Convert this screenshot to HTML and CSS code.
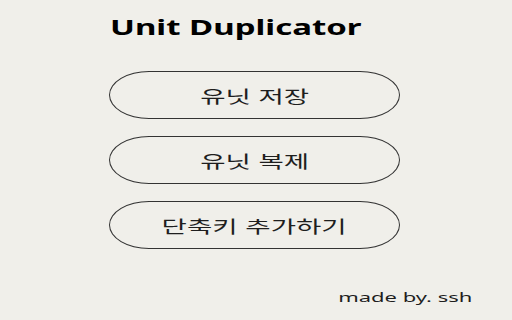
FILE: index.html
```html
<!DOCTYPE html>
<html lang="ko">
<head>
<meta charset="utf-8">
<link rel="stylesheet" href="styles.css">
</head>
<body>
<div class="app">
  <h1 class="title"><span class="stretch">Unit Duplicator</span></h1>
  <div class="buttons">
    <button class="pill"><span class="stretch">유닛 저장</span></button>
    <button class="pill"><span class="stretch">유닛 복제</span></button>
    <button class="pill"><span class="stretch">단축키 추가하기</span></button>
  </div>
  <div class="footer"><span class="stretch right">made by. ssh</span></div>
</div>
</body>
</html>
```

FILE: styles.css
```css
html, body {
  margin: 0;
  padding: 0;
  background: #f0efea;
}
body {
  width: 512px;
  height: 320px;
  overflow: hidden;
  font-family: "Noto Sans", "Noto Sans CJK KR", sans-serif;
  color: #1e1e1e;
}
.app {
  display: flex;
  flex-direction: column;
  padding: 15px 0 0 109px;
}
.stretch {
  display: inline-block;
  transform-origin: center;
  white-space: nowrap;
}
.title {
  margin: 0;
  font-size: 21px;
  line-height: 24px;
  font-weight: 700;
  color: #000;
  padding-left: 1px;
}
.title .stretch {
  transform: scaleX(1.57);
  transform-origin: left;
}
.buttons {
  display: flex;
  flex-direction: column;
  gap: 17px;
  margin-top: 32px;
}
.pill {
  width: 291px;
  height: 48px;
  box-sizing: border-box;
  border: 1.8px solid #333;
  border-radius: 40px / 24px;
  background: transparent;
  font-family: "Noto Sans CJK KR", "Noto Sans", sans-serif;
  font-size: 17px;
  font-weight: 400;
  color: #1e1e1e;
  padding: 0;
  display: flex;
  align-items: center;
  justify-content: center;
}
.pill .stretch {
  transform: scaleX(1.62);
}
.footer {
  margin-top: 40px;
  width: 363px;
  text-align: right;
  font-size: 13px;
  line-height: 16px;
  color: #1e1e1e;
}
.footer .right {
  transform: scaleX(1.69);
  transform-origin: right;
}
```
